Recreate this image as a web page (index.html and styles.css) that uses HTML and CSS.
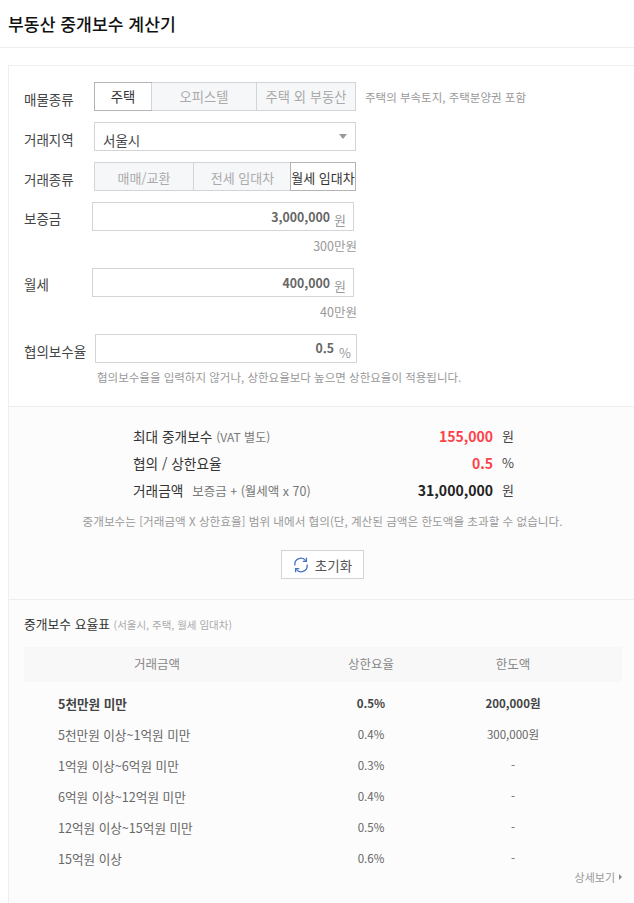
FILE: index.html
```html
<!DOCTYPE html>
<html lang="ko">
<head>
    <meta charset="UTF-8">
    <meta name="viewport" content="width=device-width, initial-scale=1.0">
    <title>부동산 중개보수 계산기</title>
    <link rel="stylesheet" href="styles.css">
</head>
<body>
    <h1 class="page-title">부동산 중개보수 계산기</h1>

    <div class="panel">
        <form class="calc-form">
            <div class="form-row">
                <span class="field-label">매물종류</span>
                <div class="seg seg-type">
                    <span class="seg-item active">주택</span>
                    <span class="seg-item">오피스텔</span>
                    <span class="seg-item">주택 외 부동산</span>
                </div>
                <span class="seg-hint">주택의 부속토지, 주택분양권 포함</span>
            </div>

            <div class="form-row">
                <span class="field-label">거래지역</span>
                <div class="select-box">서울시<span class="select-arrow"></span></div>
            </div>

            <div class="form-row">
                <span class="field-label">거래종류</span>
                <div class="seg seg-deal">
                    <span class="seg-item">매매/교환</span>
                    <span class="seg-item">전세 임대차</span>
                    <span class="seg-item active dark">월세 임대차</span>
                </div>
            </div>

            <div class="form-row money">
                <label class="field-label" for="deposit">보증금</label>
                <div class="num-box">
                    <input type="text" id="deposit" value="3,000,000">
                    <span class="unit">원</span>
                </div>
            </div>
            <div class="money-hint">300만원</div>

            <div class="form-row money">
                <label class="field-label" for="rent">월세</label>
                <div class="num-box">
                    <input type="text" id="rent" value="400,000">
                    <span class="unit">원</span>
                </div>
            </div>
            <div class="money-hint">40만원</div>

            <div class="form-row rate">
                <label class="field-label" for="rate">협의보수율</label>
                <div class="num-box">
                    <input type="text" id="rate" value="0.5">
                    <span class="unit">%</span>
                </div>
            </div>
            <p class="rate-note">협의보수율을 입력하지 않거나, 상한요율보다 높으면 상한요율이 적용됩니다.</p>
        </form>

        <section class="result">
            <div class="result-row">
                <span class="result-label">최대 중개보수 <small>(VAT 별도)</small></span>
                <strong class="result-value red">155,000</strong>
                <span class="result-unit">원</span>
            </div>
            <div class="result-row">
                <span class="result-label">협의 / 상한요율</span>
                <strong class="result-value red">0.5</strong>
                <span class="result-unit">%</span>
            </div>
            <div class="result-row">
                <span class="result-label">거래금액 <small class="formula">보증금 + (월세액 x 70)</small></span>
                <strong class="result-value">31,000,000</strong>
                <span class="result-unit">원</span>
            </div>
            <p class="result-note">중개보수는 [거래금액 X 상한효율] 범위 내에서 협의(단, 계산된 금액은 한도액을 초과할 수 없습니다.</p>
            <button type="button" class="reset-btn">
                <svg width="16" height="16" viewBox="0 0 16 16" fill="none" stroke="#4472c4" stroke-width="1.3">
                    <path d="M2 8.5A6 6 0 0 1 12.6 3.6"/>
                    <path d="M14 7.5A6 6 0 0 1 3.4 12.4"/>
                    <path d="M13.4 0.8V4.4H9.8" />
                    <path d="M2.6 15.2V11.6H6.2" />
                </svg>
                초기화
            </button>
        </section>

        <section class="rates">
            <h2 class="rates-title">중개보수 요율표 <small>(서울시, 주택, 월세 임대차)</small></h2>
            <div class="rates-head">
                <span>거래금액</span>
                <span>상한요율</span>
                <span>한도액</span>
            </div>
            <div class="rates-row current">
                <span class="range">5천만원 미만</span>
                <span>0.5%</span>
                <span>200,000원</span>
            </div>
            <div class="rates-row">
                <span class="range">5천만원 이상~1억원 미만</span>
                <span>0.4%</span>
                <span>300,000원</span>
            </div>
            <div class="rates-row">
                <span class="range">1억원 이상~6억원 미만</span>
                <span>0.3%</span>
                <span>-</span>
            </div>
            <div class="rates-row">
                <span class="range">6억원 이상~12억원 미만</span>
                <span>0.4%</span>
                <span>-</span>
            </div>
            <div class="rates-row">
                <span class="range">12억원 이상~15억원 미만</span>
                <span>0.5%</span>
                <span>-</span>
            </div>
            <div class="rates-row">
                <span class="range">15억원 이상</span>
                <span>0.6%</span>
                <span>-</span>
            </div>
            <a href="#" class="more-link">상세보기</a>
        </section>
    </div>
</body>
</html>
```

FILE: styles.css
```css
* {
    margin: 0;
    padding: 0;
    box-sizing: border-box;
}

body {
    font-family: "Noto Sans CJK KR", "Noto Sans", sans-serif;
    font-size: 13px;
    color: #444;
    background: #fff;
}

.page-title {
    height: 48px;
    padding-left: 8px;
    border-bottom: 1px solid #eee;
    font-size: 17.2px;
    font-weight: 500;
    line-height: 47px;
    color: #111;
}

.panel {
    margin: 17px 0 0 8px;
    border-top: 1px solid #eee;
    border-left: 1px solid #eee;
}

/* form */
.calc-form {
    padding: 16px 0 20px 15px;
    border-bottom: 1px solid #eee;
}

.form-row {
    display: flex;
    align-items: center;
    margin-bottom: 11px;
}

.field-label {
    flex: 0 0 70px;
    padding-top: 4px;
    font-size: 13.5px;
    color: #444;
}

.seg {
    display: grid;
    grid-template-rows: 27px;
    width: 262px;
    height: 29px;
    border: 1px solid #d4d4d8;
    background: #f6f7f9;
}

.seg-type {
    grid-template-columns: 56px 105px 1fr;
}

.seg-deal {
    grid-template-columns: 98px 98px 1fr;
}

.seg-item {
    height: 27px;
    border-left: 1px solid #d4d4d8;
    font-size: 13.3px;
    line-height: 27px;
    text-align: center;
    white-space: nowrap;
    color: #aaa;
}

.seg-deal .seg-item {
    font-size: 13px;
    line-height: 29px;
}

.seg-item:first-child {
    border-left: 0;
}

.seg-item.active {
    height: 29px;
    margin: -1px;
    border: 1px solid #b4b4b4;
    background: #fff;
    color: #333;
}

.seg-hint {
    margin-left: 9px;
    font-size: 11.5px;
    color: #999;
}

.select-box {
    position: relative;
    width: 262px;
    height: 29px;
    padding-left: 8px;
    border: 1px solid #d4d4d8;
    background: #fff;
    font-size: 13.5px;
    line-height: 34px;
}

.select-arrow {
    position: absolute;
    top: 11px;
    right: 8px;
    border-top: 5px solid #999;
    border-left: 4px solid transparent;
    border-right: 4px solid transparent;
}

.money .field-label {
    flex-basis: 68px;
    padding-top: 2px;
}

.rate .field-label {
    flex-basis: 71px;
}

.form-row.money,
.form-row.rate {
    margin-bottom: 0;
}

.num-box {
    display: flex;
    align-items: center;
    width: 262px;
    height: 29px;
    padding-right: 7px;
    border: 1px solid #d4d4d8;
    background: #fff;
}

.num-box input {
    flex: 1;
    min-width: 0;
    border: 0;
    outline: 0;
    background: none;
    font-family: inherit;
    font-size: 12.3px;
    font-weight: 700;
    text-align: right;
    color: #666;
}

.unit {
    margin: 5px 0 0 4px;
    font-size: 13px;
    color: #999;
}

.rate .num-box {
    padding-right: 5px;
}

.rate .num-box input {
    margin-top: -2px;
}

.rate .unit {
    margin-left: 5px;
    margin-top: 7px;
}

.money-hint {
    width: 333px;
    height: 18px;
    margin: 6px 0 13px;
    font-size: 12.5px;
    line-height: 18px;
    text-align: right;
    color: #999;
}

.rate-note {
    margin: 5px 0 0 73px;
    font-size: 11.5px;
    line-height: 18px;
    color: #999;
}

/* result */
.result {
    padding: 15px 0 20px;
    border-bottom: 1px solid #eee;
    background: #fcfcfc;
}

.result-row {
    display: grid;
    grid-template-columns: 360px 20px;
    column-gap: 9px;
    align-items: center;
    height: 27px;
    margin-left: 124px;
}

.result-row > * {
    grid-row: 1;
}

.result-label {
    grid-column: 1;
    font-size: 13.7px;
    color: #333;
}

.result-label small {
    font-size: 12px;
    color: #777;
}

.result-label .formula {
    margin-left: 5px;
    font-size: 12.5px;
}

.result-value {
    grid-column: 1;
    justify-self: end;
    font-size: 14px;
    color: #222;
}

.result-value.red {
    color: #ff3f4a;
}

.result-unit {
    grid-column: 2;
    font-size: 13px;
    color: #444;
}

.result-note {
    margin: 9px 0 20px;
    padding-left: 2px;
    font-size: 11.6px;
    line-height: 18px;
    text-align: center;
    color: #999;
}

.reset-btn {
    display: flex;
    align-items: center;
    justify-content: center;
    gap: 6px;
    width: 83px;
    height: 29px;
    margin-left: 272px;
    border: 1px solid #d4d4d8;
    background: #fff;
    font-family: inherit;
    font-size: 13.5px;
    color: #555;
}

/* rates table */
.rates {
    padding: 15px 0 17px 15px;
    background: #fcfcfc;
}

.rates-title {
    height: 18px;
    margin-bottom: 14px;
    font-size: 12.8px;
    font-weight: 400;
    line-height: 18px;
    color: #333;
}

.rates-title small {
    font-size: 10.5px;
    color: #aaa;
}

.rates-head,
.rates-row {
    display: grid;
    grid-template-columns: 266px 162px 122px;
    width: 598px;
    text-align: center;
}

.rates-head {
    height: 35px;
    margin-bottom: 7px;
    background: #f8f8f8;
    font-size: 12.5px;
    line-height: 33px;
    color: #888;
}

.rates-row {
    height: 31px;
    font-size: 11.5px;
    line-height: 29px;
    color: #666;
}

.rates-row .range {
    padding-left: 34px;
    font-size: 12.6px;
    text-align: left;
}

.rates-row.current {
    font-weight: 700;
    color: #444;
}

.more-link {
    display: block;
    width: 598px;
    height: 18px;
    margin-top: -7px;
    font-size: 11px;
    line-height: 18px;
    text-align: right;
    text-decoration: none;
    color: #999;
}

.more-link::after {
    content: "";
    display: inline-block;
    margin-left: 4px;
    vertical-align: 2px;
    border-left: 3px solid #888;
    border-top: 3px solid transparent;
    border-bottom: 3px solid transparent;
}
```
